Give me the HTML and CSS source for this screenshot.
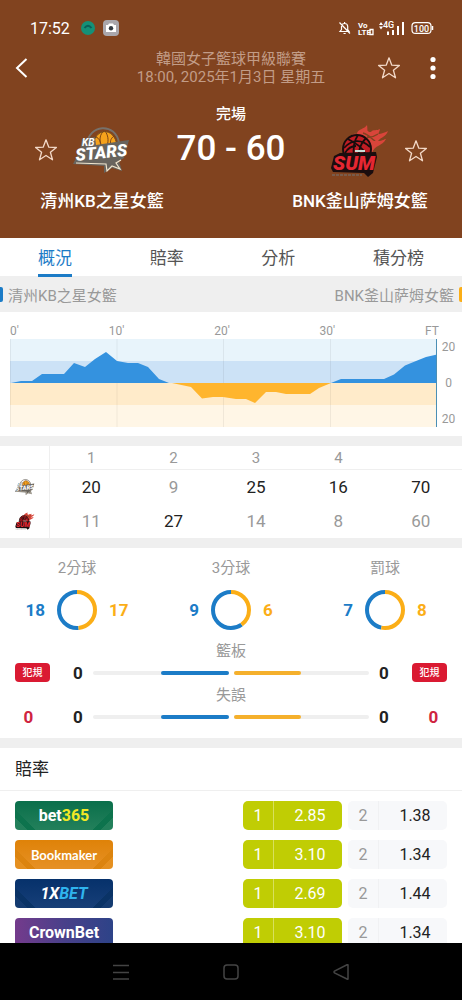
FILE: index.html
```html
<!DOCTYPE html>
<html lang="zh-Hant">
<head>
    <meta charset="UTF-8">
    <meta name="viewport" content="width=device-width, initial-scale=1.0">
    <title>清州KB之星女籃 70 - 60 BNK釜山萨姆女籃</title>
    <link rel="stylesheet" href="styles.css">
</head>
<body>
    <svg class="defs" width="0" height="0" aria-hidden="true">
        <symbol id="star" viewBox="0 0 24 24">
            <path d="M12 1.8 L14.8 9.2 L22.4 9.5 L16.4 14.3 L18.5 21.8 L12 17.5 L5.5 21.8 L7.6 14.3 L1.6 9.5 L9.2 9.2 Z" fill="none" stroke="#f3d9c8" stroke-width="1.3" stroke-linejoin="round"/>
        </symbol>
    </svg>

    <header class="header">
        <div class="status-bar">
            <span class="clock">17:52</span>
            <svg class="status-app" width="16" height="16" viewBox="0 0 16 16">
                <circle cx="8" cy="8" r="7" fill="#159077"/>
                <path d="M4.500 8 Q8 3.500 11.500 8" fill="none" stroke="#0a5f58" stroke-width="2"/>
            </svg>
            <svg width="16" height="16" viewBox="0 0 16 16">
                <rect width="16" height="16" rx="4" fill="#aaa7ac"/>
                <path d="M3 5 H5 L6 3.5 H10 L11 5 H13 V12 H3 Z" fill="#fff"/>
                <circle cx="8" cy="8.3" r="2.2" fill="#333b42"/>
            </svg>
            <svg class="status-right" width="96" height="16" viewBox="0 0 96 16">
                <g fill="none" stroke="#fff" stroke-width="1.2">
                    <path d="M2 11.5 H11 L9.700 9.500 V6.500 C9.700 2.500 3.500 2.500 3.500 6.500 V9.500 Z M5.500 13.500 H7.700 M6.600 2 V3.500 M1.500 2.500 L12 13.500"/>
                    <rect x="74" y="2.600" width="19" height="10.800" rx="3.500"/>
                </g>
                <path d="M94.500 6 V10" stroke="#fff" stroke-width="1.500"/>
                <text x="20" y="8" class="tiny">Vo</text>
                <text x="20" y="15" class="tiny">LTE</text>
                <path d="M32 9.500 H35 V14.500 H32 Z" fill="none" stroke="#fff" stroke-width="1.300"/>
                <path d="M41 5 L43 2 L45 5 Z M41 6.500 L43 9.500 L45 6.500 Z" fill="#fff"/>
                <text x="45" y="8" class="net">4G</text>
                <path d="M50 11.500 V15 M55 10 V15 M60 6 V15 M65 2 V15" stroke="#fff" stroke-width="2"/>
                <text x="83.500" y="11.500" text-anchor="middle" class="charge">100</text>
            </svg>
        </div>

        <div class="top-bar">
            <button class="icon-btn back" aria-label="返回">
                <svg width="14" height="22" viewBox="0 0 14 22"><path d="M11.500 2 L2 11 L11.500 20" fill="none" stroke="#fff" stroke-width="2"/></svg>
            </button>
            <div class="league">
                <div>韓國女子籃球甲級聯賽</div>
                <div>18:00, 2025年1月3日 星期五</div>
            </div>
            <div class="top-actions">
                <button class="icon-btn" aria-label="收藏賽事"><svg width="24" height="24"><use href="#star"/></svg></button>
                <button class="icon-btn" aria-label="更多">
                    <svg width="6" height="24" viewBox="0 0 6 24" fill="#fff"><circle cx="3" cy="3.500" r="2.600"/><circle cx="3" cy="12" r="2.600"/><circle cx="3" cy="20.500" r="2.600"/></svg>
                </button>
            </div>
        </div>

        <div class="match-state">完場</div>
        <div class="match">
            <div class="team">
                <div class="team-top">
                    <button class="icon-btn" aria-label="收藏主隊"><svg width="24" height="24"><use href="#star"/></svg></button>
                    <svg id="logo-kb" width="58" height="50" viewBox="0 0 58 50">
                        <path d="M14 20 C15 -1 43 -3 46 18" fill="none" stroke="#77716b" stroke-width="2"/>
                        <path d="M20 23 C20 2 42 1 44 21 Z" fill="#f6a21c" stroke="#6b4a20" stroke-width="1"/>
                        <path d="M28 21 C26 14 27 9 31 6 M34 21 C36 15 35 10 32 6 M23 12 C26 13 28 17 28 21 M41 11 C37 14 37 17 38 21" fill="none" stroke="#7a4315" stroke-width="1"/>
                        <path d="M0 39 L7 25 L9 14 L22 12 L23 20 L56 15 L51 33 L46 36 L49 46 L39 43 L31 48 L31 41 Z" fill="#68645e"/>
                        <path d="M3 38 L33 39 L34 46 L39 41 L47 44 L43 38 L48 35" fill="none" stroke="#efe4cd" stroke-width="1.2"/>
                        <text x="9" y="21" class="kb-small">KB</text>
                        <text x="3" y="36" class="kb-big" transform="rotate(-6 3 36)">STARS</text>
                    </svg>
                    <span></span>
                </div>
                <div class="team-name">清州KB之星女籃</div>
            </div>
            <div class="score">70 - 60</div>
            <div class="team">
                <div class="team-top">
                    <span></span>
                    <svg id="logo-sum" width="58" height="54" viewBox="0 0 58 54">
                        <path d="M14 19 C18 11 23 9 26 10 C26 5 34 5 36 1 C37 6 35 8 40 8 C42 5 46 7 49 5 C48 10 45 11 52 9 C54 8 56 8 57 7 C55 13 50 13 47 17 C52 17 53 15 55 15 C51 23 44 20 41 29 L24 30 Z" fill="#d8453a"/>
                        <path d="M32 9 C39 11 43 18 44 16 M36 13 C41 14 44 12 47 10" fill="none" stroke="#81431f" stroke-width="1.4"/>
                        <circle cx="26" cy="25" r="14" fill="#c01d24" stroke="#170d0d" stroke-width="2"/>
                        <path d="M13 24 C21 15 31 15 39 23 M27 11 C22 18 22 26 23 34 M17 15 C24 19 32 23 35 31 M35 14 C29 20 27 27 28 35 M14 29 C17 24 21 22 25 22" fill="none" stroke="#170d0d" stroke-width="1.8"/>
                        <path d="M3 32 L9 29 L45 28 L46 33 L42 49 L37 53 L33 49 L2 48 L0 44 Z" fill="#1b0d0e"/>
                        <path d="M24 27 H34" stroke="#c8ddd6" stroke-width="2"/>
                        <text x="2" y="46" class="sum-text">SUM</text>
                        <path d="M1 51 H31" stroke="#75645a" stroke-width="1.500" stroke-dasharray="3 1"/>
                    </svg>
                    <button class="icon-btn" aria-label="收藏客隊"><svg width="24" height="24"><use href="#star"/></svg></button>
                </div>
                <div class="team-name">BNK釜山萨姆女籃</div>
            </div>
        </div>
    </header>

    <nav class="tabs">
        <button class="tab active">概況</button>
        <button class="tab">賠率</button>
        <button class="tab">分析</button>
        <button class="tab">積分榜</button>
    </nav>

    <main class="content">
        <div class="legend">
            <span class="legend-home">清州KB之星女籃</span>
            <span class="legend-away">BNK釜山萨姆女籃</span>
        </div>

        <section class="chart">
            <div class="x-axis">
                <span>0'</span><span>10'</span><span>20'</span><span>30'</span><span>FT</span>
            </div>
            <div class="plot-row">
                <svg class="plot" viewBox="0 0 427 88" preserveAspectRatio="none">
                    <rect width="427" height="22" fill="#e8f4fb"/>
                    <rect y="22" width="427" height="22" fill="#cce2f6"/>
                    <rect y="44" width="427" height="22" fill="#ffebca"/>
                    <rect y="66" width="427" height="22" fill="#fff6e6"/>
                    <path d="M0.500 0 V88 M107 0 V88 M213.500 0 V88 M320.500 0 V88" stroke="#000" stroke-opacity=".06"/>
                    <path d="M1 44 L11 42 H22 L32 35 H54 L64 24 L75 28 L85 20 L96 13 L107 22 L118 24 H128 L138 28 L149 40 L159 44 Z" fill="#3492df"/>
                    <path d="M162 44 L181 48 L192 59.500 L203 58 H213 L226 60 H236 L245 64 L256 53 H266 L276 55 H300 L309 49 L321 44 Z" fill="#ffb52e"/>
                    <path d="M321 44 L331 40 H374 L384 35.500 L395 26.500 L406 22 L416 18 L427 15.500 V44 Z" fill="#3492df"/>
                    <path d="M426.500 0 V88" stroke="#4b8fb5"/>
                </svg>
                <div class="y-axis"><span>20</span><span>0</span><span>20</span></div>
            </div>
        </section>

        <table class="periods">
            <thead>
                <tr><th class="logo-col"></th><th>1</th><th>2</th><th>3</th><th>4</th><th></th></tr>
            </thead>
            <tbody>
                <tr>
                    <td class="logo-col"><svg width="20" height="18"><use href="#logo-kb" width="20" height="18"/></svg></td>
                    <td class="won">20</td><td>9</td><td class="won">25</td><td class="won">16</td><td class="won">70</td>
                </tr>
                <tr>
                    <td class="logo-col"><svg width="20" height="18"><use href="#logo-sum" width="20" height="18"/></svg></td>
                    <td>11</td><td class="won">27</td><td>14</td><td>8</td><td>60</td>
                </tr>
            </tbody>
        </table>

        <section class="stats">
            <!-- rings start at the top: away share first, home share after it -->
            <div class="shots">
                <div class="shot">
                    <div class="stat-label">2分球</div>
                    <div class="shot-row">
                        <b class="home">18</b>
                        <svg width="40" height="40" viewBox="0 0 40 40">
                            <circle class="ring ring-home" cx="20" cy="20" r="18" pathLength="35" stroke-dasharray="18 17" stroke-dashoffset="-17"/>
                            <circle class="ring ring-away" cx="20" cy="20" r="18" pathLength="35" stroke-dasharray="17 18"/>
                        </svg>
                        <b class="away">17</b>
                    </div>
                </div>
                <div class="shot">
                    <div class="stat-label">3分球</div>
                    <div class="shot-row">
                        <b class="home">9</b>
                        <svg width="40" height="40" viewBox="0 0 40 40">
                            <circle class="ring ring-home" cx="20" cy="20" r="18" pathLength="15" stroke-dasharray="9 6" stroke-dashoffset="-6"/>
                            <circle class="ring ring-away" cx="20" cy="20" r="18" pathLength="15" stroke-dasharray="6 9"/>
                        </svg>
                        <b class="away">6</b>
                    </div>
                </div>
                <div class="shot">
                    <div class="stat-label">罰球</div>
                    <div class="shot-row">
                        <b class="home">7</b>
                        <svg width="40" height="40" viewBox="0 0 40 40">
                            <circle class="ring ring-home" cx="20" cy="20" r="18" pathLength="15" stroke-dasharray="7 8" stroke-dashoffset="-8"/>
                            <circle class="ring ring-away" cx="20" cy="20" r="18" pathLength="15" stroke-dasharray="8 7"/>
                        </svg>
                        <b class="away">8</b>
                    </div>
                </div>
            </div>

            <div class="team-stats">
                <div class="fouls fouls-home">
                    <span class="foul-badge">犯規</span>
                    <b>0</b>
                </div>
                <div class="bars">
                    <div class="stat-label">籃板</div>
                    <div class="bar-row">
                        <b>0</b>
                        <div class="track track-home"><div class="fill" style="width: 50%"></div></div>
                        <div class="track track-away"><div class="fill" style="width: 50%"></div></div>
                        <b>0</b>
                    </div>
                    <div class="stat-label">失誤</div>
                    <div class="bar-row">
                        <b>0</b>
                        <div class="track track-home"><div class="fill" style="width: 50%"></div></div>
                        <div class="track track-away"><div class="fill" style="width: 50%"></div></div>
                        <b>0</b>
                    </div>
                </div>
                <div class="fouls fouls-away">
                    <span class="foul-badge">犯規</span>
                    <b>0</b>
                </div>
            </div>
        </section>

        <section class="odds">
            <h2>賠率</h2>
            <div class="odds-list">
                <div class="odds-row">
                    <a class="bookie bet365" href="#">bet<span>365</span></a>
                    <button class="odd best"><span>1</span><span>2.85</span></button>
                    <button class="odd"><span>2</span><span>1.38</span></button>
                </div>
                <div class="odds-row">
                    <a class="bookie bookmaker" href="#">Bookmaker</a>
                    <button class="odd best"><span>1</span><span>3.10</span></button>
                    <button class="odd"><span>2</span><span>1.34</span></button>
                </div>
                <div class="odds-row">
                    <a class="bookie xbet" href="#">1X<span>BET</span></a>
                    <button class="odd best"><span>1</span><span>2.69</span></button>
                    <button class="odd"><span>2</span><span>1.44</span></button>
                </div>
                <div class="odds-row">
                    <a class="bookie crownbet" href="#">CrownBet</a>
                    <button class="odd best"><span>1</span><span>3.10</span></button>
                    <button class="odd"><span>2</span><span>1.34</span></button>
                </div>
            </div>
        </section>
    </main>

    <footer class="system-nav">
        <button aria-label="最近"><svg width="16" height="16" viewBox="0 0 16 16"><path d="M0 1.500 H16 M0 8.500 H16 M0 15 H16"/></svg></button>
        <button aria-label="主頁"><svg width="16" height="16" viewBox="0 0 16 16"><rect x="1" y="1" width="14" height="14" rx="3"/></svg></button>
        <button aria-label="返回"><svg width="16" height="16" viewBox="0 0 16 16"><path d="M15 1 V15 Q15 15.500 14 15 L1.500 9 Q0.500 8 1.500 7 L14 0.800 Q15 0.500 15 1 Z"/></svg></button>
    </footer>
</body>
</html>
```

FILE: styles.css
```css
* {
    box-sizing: border-box;
}

body {
    margin: 0;
    height: 100vh;
    display: flex;
    flex-direction: column;
    overflow: hidden;
    background-color: #fff;
    color: #222;
    font-family: Roboto, "Noto Sans CJK TC", sans-serif;
    font-size: 15px;
}

button {
    padding: 0;
    border: none;
    background: none;
    color: inherit;
    font: inherit;
    cursor: pointer;
}

svg {
    display: block;
}

.defs {
    position: absolute;
}

/* header */
.header {
    flex: none;
    padding-bottom: 24px;
    background-color: #81431f;
    color: #fff;
}

.status-bar {
    display: flex;
    align-items: center;
    height: 24px;
    margin-top: 16px;
    padding: 0 28px 0 30px;
}

.clock {
    font-size: 16px;
}

.status-app {
    margin: 0 7px 0 10px;
}

.status-right {
    margin-left: auto;
}

.tiny {
    font: 700 8px Roboto, sans-serif;
    fill: #fff;
}

.net {
    font: 500 9px Roboto, sans-serif;
    fill: #fff;
}

.charge {
    font: 500 9px Roboto, sans-serif;
    fill: #fff;
}

.top-bar {
    display: grid;
    grid-template-columns: 1fr auto 1fr;
    align-items: center;
    margin-top: 10px;
    padding: 0 15px;
}

.icon-btn {
    display: flex;
    align-items: center;
}

.back {
    justify-self: start;
}

.league {
    line-height: 18px;
    text-align: center;
    color: #c29c87;
}

.top-actions {
    display: flex;
    justify-content: flex-end;
    gap: 29px;
    padding-right: 11px;
}

.match-state {
    margin-top: 18px;
    line-height: 20px;
    text-align: center;
    font-weight: 500;
}

.match {
    display: grid;
    grid-template-columns: 136px 1fr 136px;
    padding: 0 34px;
}

.team-top {
    display: grid;
    grid-template-columns: 24px 1fr 24px;
    align-items: center;
    justify-items: center;
    height: 52px;
}

.team-name {
    margin-top: 12px;
    line-height: 26px;
    font-size: 17px;
    font-weight: 500;
    text-align: center;
    white-space: nowrap;
}

.score {
    line-height: 50px;
    font-size: 35px;
    font-weight: 500;
    text-align: center;
    white-space: nowrap;
}

.kb-small {
    font: italic 700 10px Roboto, sans-serif;
    fill: #fff;
}

.kb-big {
    font: italic 900 17px Roboto, sans-serif;
    fill: #fff;
}

.sum-text {
    font: italic 900 20px Roboto, sans-serif;
    fill: #e52732;
}

/* tabs */
.tabs {
    flex: none;
    position: relative;
    display: flex;
    justify-content: space-between;
    height: 38px;
    padding: 0 38px;
    background-color: #fff;
}

.tab {
    height: 39px;
    border-bottom: 3px solid transparent;
    font-size: 17px;
    color: #555;
}

.tab.active {
    color: #1c7cc7;
    border-bottom-color: #1c7cc7;
}

/* content */
.content {
    flex: 1;
    min-height: 0;
    overflow: hidden;
    background-color: #efefef;
}

.legend {
    display: flex;
    justify-content: space-between;
    align-items: center;
    height: 36px;
    color: #999;
}

.legend-home,
.legend-away {
    display: flex;
    align-items: center;
    gap: 5px;
}

.legend-home::before,
.legend-away::after {
    content: "";
    width: 3px;
    height: 15px;
    background-color: #1c7cc7;
    border-radius: 0 2px 2px 0;
}

.legend-away::after {
    background-color: #fbae17;
    border-radius: 2px 0 0 2px;
}

.chart {
    padding: 12px 0 9px 10px;
    background-color: #fff;
    color: #999;
    font-size: 12px;
}

.x-axis {
    display: flex;
    justify-content: space-between;
    margin-right: 23px;
    line-height: 15px;
}

.plot-row {
    display: flex;
}

.plot {
    flex: 1;
    min-width: 0;
    height: 88px;
}

.y-axis {
    display: flex;
    flex-direction: column;
    justify-content: space-between;
    width: 25px;
    padding-right: 2px;
    line-height: 16px;
    text-align: center;
}

.periods {
    width: 100%;
    margin: 10px 0;
    border-collapse: separate;
    border-spacing: 0;
    table-layout: fixed;
    background-color: #fff;
    text-align: center;
    color: #999;
}

.periods th {
    height: 24px;
    padding: 0;
    border-bottom: 1px solid #efefef;
    font-weight: 400;
}

.periods td {
    height: 34px;
    padding: 0;
    font-size: 17px;
}

.periods .logo-col {
    width: 50px;
    border-right: 1px solid #efefef;
}

.periods svg {
    margin: 0 auto;
}

.periods .won {
    color: #222;
}

/* statistics */
.stats {
    padding: 9px 0 10px;
    background-color: #fff;
}

.stat-label {
    line-height: 22px;
    text-align: center;
    color: #999;
}

.stats b {
    font-size: 17px;
    font-weight: 700;
}

.shots {
    display: flex;
}

.shot {
    flex: 1;
}

.shot-row {
    display: grid;
    grid-template-columns: 1fr 40px 1fr;
    gap: 12px;
    align-items: center;
    margin: 11px 0 10px;
}

.shot-row .home {
    text-align: right;
    color: #1c7cc7;
}

.shot-row .away {
    color: #fbae17;
}

.ring {
    fill: none;
    stroke-width: 4;
    transform: rotate(-90deg);
    transform-origin: center;
}

.ring-home {
    stroke: #1c7cc7;
}

.ring-away {
    stroke: #fbae17;
}

.team-stats {
    display: flex;
    gap: 13px;
    padding: 0 15px;
}

.fouls {
    display: flex;
    flex-direction: column;
    gap: 24px;
    width: 35px;
    padding-top: 23px;
    text-align: center;
}

.foul-badge {
    line-height: 19px;
    border-radius: 4px;
    background-color: #da1a32;
    color: #fff;
    font-size: 10px;
    font-weight: 500;
}

.fouls b {
    line-height: 22px;
    color: #cf2340;
}

.fouls-home b {
    padding-right: 8px;
}

.fouls-away b {
    padding-left: 8px;
}

.bars {
    flex: 1;
}

.bar-row {
    display: flex;
    align-items: center;
    height: 22px;
}

.bar-row b {
    width: 30px;
    text-align: center;
}

.track {
    display: flex;
    flex: 1;
    height: 4px;
    border-radius: 2px;
    background-color: #efefef;
}

.track-home {
    justify-content: flex-end;
    margin-right: 5px;
}

.fill {
    border-radius: 2px;
    background-color: #1c7cc7;
}

.track-away .fill {
    background-color: #f5b02c;
}

/* odds */
.odds {
    margin-top: 10px;
    background-color: #fff;
}

.odds h2 {
    margin: 0;
    padding: 0 15px;
    line-height: 42px;
    border-bottom: 1px solid #efefef;
    font-size: 17px;
    font-weight: 400;
}

.odds-list {
    display: flex;
    flex-direction: column;
    gap: 10px;
    padding: 10px 15px;
}

.odds-row {
    display: flex;
    gap: 6px;
    height: 29px;
}

.bookie {
    display: flex;
    align-items: center;
    justify-content: center;
    width: 98px;
    margin-right: auto;
    border-radius: 4px;
    color: #fff;
    font-size: 16px;
    font-weight: 700;
    text-decoration: none;
}

.bet365 {
    background: linear-gradient(45deg, #23805b 10%, #0d734d 10%, #0d734d 16%, transparent 16%),
        linear-gradient(-45deg, #23805b 10%, #0d734d 10%, #0d734d 16%, transparent 16%),
        linear-gradient(#0a6f4b, #23805b);
}

.bet365 span {
    color: #f3e925;
}

.bookmaker {
    background: linear-gradient(45deg, #e59020 10%, #dc840f 10%, #dc840f 16%, transparent 16%),
        linear-gradient(-45deg, #e59020 10%, #dc840f 10%, #dc840f 16%, transparent 16%),
        linear-gradient(#df8208, #e69125);
    font-family: Lato, sans-serif;
    font-size: 13px;
}

.xbet {
    background: linear-gradient(45deg, #143b70 10%, #0a3366 10%, #0a3366 16%, transparent 16%),
        linear-gradient(-45deg, #143b70 10%, #0a3366 10%, #0a3366 16%, transparent 16%),
        linear-gradient(#06316b, #173f78);
    font-style: italic;
}

.xbet span {
    color: #2fb4ee;
}

.crownbet {
    background: linear-gradient(90deg, #743b8c, #49408a 50%, #2d4388);
}

.odd {
    display: flex;
    align-items: center;
    width: 99px;
    border-radius: 5px;
    background-color: #f7f8fa;
    font-size: 16px;
    line-height: 29px;
}

.odd span:first-child {
    width: 31px;
    border-right: 1px solid #f0f1f3;
    color: #999;
}

.odd span:last-child {
    flex: 1;
    padding-left: 4px;
}

.odd.best {
    background-color: #c0cd04;
    color: #fff;
}

.odd.best span:first-child {
    border-right-color: #d8e05c;
    color: #fff;
}

/* android navigation */
.system-nav {
    flex: none;
    display: flex;
    height: 57px;
    padding: 0 66px;
    background-color: #000;
}

.system-nav button {
    flex: 1;
    display: flex;
    align-items: center;
    justify-content: center;
}

.system-nav svg {
    fill: none;
    stroke: #444;
    stroke-width: 1.5;
}
```
